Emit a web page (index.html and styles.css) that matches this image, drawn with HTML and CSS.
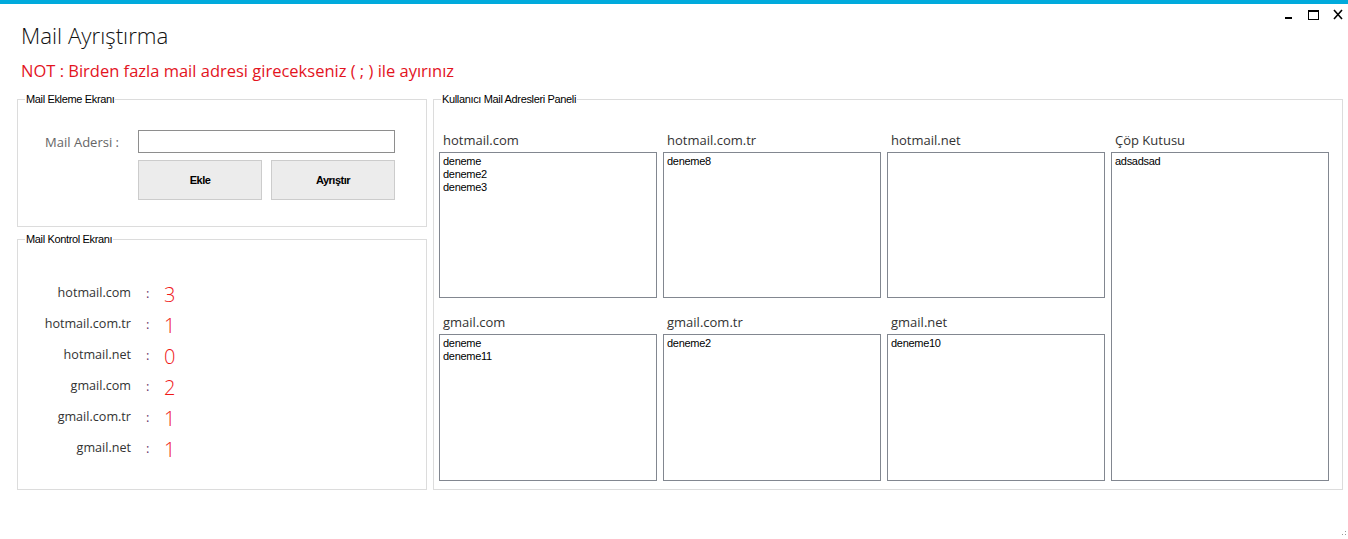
FILE: index.html
```html
<!DOCTYPE html>
<html lang="tr">
<head>
<meta charset="utf-8">
<title>Mail Ayrıştırma</title>
<link rel="stylesheet" href="styles.css">
</head>
<body>
<div class="window">
  <div class="accent"></div>
  <header class="header">
    <div class="heading">
      <h1 class="title">Mail Ayrıştırma</h1>
      <p class="note">NOT : Birden fazla mail adresi girecekseniz ( ; ) ile ayırınız</p>
    </div>
    <svg class="controls" width="70" height="16" viewBox="0 0 70 16" aria-hidden="true">
      <rect x="7" y="11" width="7" height="2" fill="#000"/>
      <rect x="30.5" y="4.5" width="10" height="9" fill="none" stroke="#000" stroke-width="1"/>
      <rect x="30" y="4" width="11" height="2" fill="#000"/>
      <path d="M56 4 L64 13 M64 4 L56 13" stroke="#000" stroke-width="1.6" fill="none"/>
    </svg>
  </header>

  <main class="main">
    <div class="left-col">
      <section class="group group-add">
        <span class="legend">Mail Ekleme Ekranı</span>
        <div class="add-row">
          <label class="field-label" for="mail">Mail Adersi :</label>
          <input id="mail" class="text-input" type="text">
        </div>
        <div class="btn-row">
          <button class="btn">Ekle</button>
          <button class="btn">Ayrıştır</button>
        </div>
      </section>

      <section class="group group-stats">
        <span class="legend">Mail Kontrol Ekranı</span>
        <div class="stats">
          <div class="stat-row"><span class="stat-name">hotmail.com</span><span class="stat-colon">:</span><span class="stat-num">3</span></div>
          <div class="stat-row"><span class="stat-name">hotmail.com.tr</span><span class="stat-colon">:</span><span class="stat-num">1</span></div>
          <div class="stat-row"><span class="stat-name">hotmail.net</span><span class="stat-colon">:</span><span class="stat-num">0</span></div>
          <div class="stat-row"><span class="stat-name">gmail.com</span><span class="stat-colon">:</span><span class="stat-num">2</span></div>
          <div class="stat-row"><span class="stat-name">gmail.com.tr</span><span class="stat-colon">:</span><span class="stat-num">1</span></div>
          <div class="stat-row"><span class="stat-name">gmail.net</span><span class="stat-colon">:</span><span class="stat-num">1</span></div>
        </div>
      </section>
    </div>

    <section class="group group-lists">
      <span class="legend">Kullanıcı Mail Adresleri Paneli</span>
      <div class="lists">
        <div class="list-cell">
          <div class="list-label">hotmail.com</div>
          <div class="listbox"><div>deneme</div><div>deneme2</div><div>deneme3</div></div>
        </div>
        <div class="list-cell">
          <div class="list-label">hotmail.com.tr</div>
          <div class="listbox"><div>deneme8</div></div>
        </div>
        <div class="list-cell">
          <div class="list-label">hotmail.net</div>
          <div class="listbox"></div>
        </div>
        <div class="list-cell trash">
          <div class="list-label">Çöp Kutusu</div>
          <div class="listbox listbox-tall"><div>adsadsad</div></div>
        </div>
        <div class="list-cell">
          <div class="list-label">gmail.com</div>
          <div class="listbox listbox-low"><div>deneme</div><div>deneme11</div></div>
        </div>
        <div class="list-cell">
          <div class="list-label">gmail.com.tr</div>
          <div class="listbox listbox-low"><div>deneme2</div></div>
        </div>
        <div class="list-cell">
          <div class="list-label">gmail.net</div>
          <div class="listbox listbox-low"><div>deneme10</div></div>
        </div>
      </div>
    </section>
  </main>

  <svg class="grip" width="6" height="6" viewBox="0 0 6 6" aria-hidden="true">
    <rect x="4" y="0" width="1" height="1" fill="#999"/>
    <rect x="1" y="3" width="1" height="1" fill="#999"/>
    <rect x="4" y="3" width="1" height="1" fill="#999"/>
  </svg>
</div>
</body>
</html>
```

FILE: styles.css
```css
* { box-sizing: border-box; }

html, body {
  margin: 0;
  padding: 0;
  background: #ffffff;
}

body {
  font-family: "Open Sans", "Noto Sans", sans-serif;
  color: #000;
}

.window {
  position: relative;
  width: 1348px;
  height: 539px;
  overflow: hidden;
}

.accent {
  height: 4px;
  background: #00aadc;
}

.header {
  display: flex;
  justify-content: space-between;
  align-items: flex-start;
}

.heading {
  padding-left: 21px;
}

.title {
  margin: 16px 0 0 0;
  font-size: 22.3px;
  line-height: 32px;
  font-weight: 300;
  color: #111;
}

.note {
  margin: 8px 0 0 0;
  font-size: 16.5px;
  line-height: 22px;
  font-weight: 400;
  color: #e3141e;
}

.controls {
  display: block;
  margin-top: 2px;
}

.main {
  display: flex;
  align-items: flex-start;
  gap: 6px;
  margin-top: 17px;
  padding-left: 17px;
}

.left-col {
  display: flex;
  flex-direction: column;
  gap: 12px;
  width: 410px;
  flex: none;
}

.group {
  position: relative;
  border: 1px solid #dcdcdc;
}

.legend {
  position: absolute;
  top: -7px;
  left: 7px;
  padding: 0 1px 0 1px;
  background: #fff;
  font-family: "Liberation Sans", Arial, sans-serif;
  font-size: 11px;
  line-height: 13px;
  letter-spacing: -0.35px;
  color: #000;
}

/* group 1 */
.group-add {
  height: 128px;
  padding-top: 30px;
}

.add-row {
  display: flex;
  align-items: center;
}

.field-label {
  width: 120px;
  flex: none;
  text-align: right;
  padding-right: 19px;
  font-size: 13px;
  line-height: 18px;
  color: #666;
}

.text-input {
  width: 257px;
  height: 23px;
  flex: none;
  border: 1px solid #8e8e8e;
  background: #fff;
  margin: 0;
  padding: 0 3px;
  outline: none;
}

.btn-row {
  display: flex;
  gap: 9px;
  margin-top: 7px;
  padding-left: 120px;
}

.btn {
  width: 124px;
  height: 40px;
  flex: none;
  margin: 0;
  padding: 0;
  border: 1px solid #cccccc;
  background: #ececec;
  font-family: "Liberation Sans", Arial, sans-serif;
  font-weight: 700;
  font-size: 11px;
  letter-spacing: -0.5px;
  color: #000;
}

/* group 2 */
.group-stats {
  height: 251px;
  padding-top: 44px;
}

.stat-row {
  display: flex;
  align-items: flex-start;
  height: 31px;
}

.stat-name {
  width: 113px;
  text-align: right;
  font-size: 12.6px;
  line-height: 18px;
  color: #333;
}

.stat-colon {
  width: 33px;
  padding-left: 15px;
  font-size: 13px;
  line-height: 18px;
  color: #6b3a6b;
}

.stat-num {
  font-size: 20px;
  line-height: 22px;
  font-weight: 300;
  color: #f01818;
}

/* group 3 */
.group-lists {
  width: 910px;
  height: 391px;
  flex: none;
  padding: 31px 0 0 5px;
}

.lists {
  display: grid;
  grid-template-columns: repeat(4, 218px);
  grid-template-rows: auto auto;
  column-gap: 6px;
  row-gap: 15px;
}

.list-cell {
  display: flex;
  flex-direction: column;
}

.trash {
  grid-column: 4;
  grid-row: 1 / 3;
}

.list-label {
  padding-left: 4px;
  margin-bottom: 3px;
  font-size: 13px;
  line-height: 18px;
  color: #333;
}

.listbox {
  height: 146px;
  border: 1px solid #828790;
  background: #fff;
  padding: 2px 3px;
  font-family: "Liberation Sans", Arial, sans-serif;
  font-size: 11px;
  line-height: 13px;
  letter-spacing: -0.3px;
  color: #000;
}

.listbox-low {
  height: 147px;
}

.listbox-tall {
  flex: 1;
  height: auto;
}

.grip {
  position: absolute;
  right: 1px;
  bottom: 2px;
}
```
